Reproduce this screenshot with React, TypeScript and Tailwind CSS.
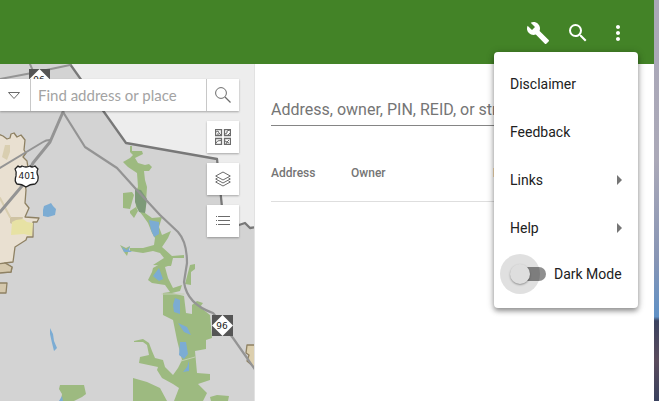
import type { ReactNode } from "react";
import { MdArrowRight, MdBuild, MdMoreVert, MdSearch } from "react-icons/md";

function CountyMap() {
  return (
    <svg className="h-full w-full [grid-area:1/1]" role="img" aria-label="County map">
      <g transform="translate(0 -64)" strokeLinejoin="round" strokeLinecap="round">
        <path d="M70 64 126 143 217 159 222 207 230 222 239 225 245 223 250 228 256 227V64Z" fill="#ededed" />

        {/* municipal limits */}
        <g stroke="#8e8163" strokeWidth="1.3" fill="#e9e0d1">
          <path d="M-2 134 3 136 7 139 10 138 11 134 14 133 17 137 21 135 25 140 24 150 26 153 23 157 27 161 29 175 25 184 26 190 25 203 29 208 25 217 39 218 37 222 33 222 33 237 27 237 26 240 15 247 13 262 5 263 12 267 11 272-2 273Z" />
          <path d="M-2 264 5 263 12 267 11 272-2 273ZM-2 283 7 283 6 293-2 293Z" fill="#d5c8ac" />
          <path d="M256 345 247 345 246 353 249 355 247 361 256 369Z" fill="#dccfae" />
        </g>
        <path d="M5 145 10 145 10 152 7 160 2 157Z" fill="#d9ceb0" />
        <path d="M10 217 23 217 22 221 14 225 10 223Z" fill="#cfc3a3" />
        <path d="M0 198 10 217" stroke="#d9ceb0" strokeWidth="2" />
        <path d="M12 222 16 220 23 219 27 222 33 223 32 236 24 234 11 235Z" fill="#e7e2a4" />

        {/* parks and game lands */}
        <g fill="#9dba80">
          <path d="M130 146 132 146 132 151 142 151 143 154 135 158 138 163 145 165 149 164 152 167 149 171 144 171 145 180 147 187 146 202 145 213 152 218 162 217 159 227 162 235 171 231 168 238 162 247 172 256 184 255 184 258 173 258 171 266 153 265 164 258 160 253 153 251 143 253 130 251 130 248 143 248 154 245 155 238 152 233 148 223 143 216 136 207 135 193 138 187 137 173 128 167 123 162 130 158 133 155 130 152Z" />
          <path d="M123 193 132 192 134 195 130 209 123 208ZM130 211 136 207 138 211 134 218 130 213Z" />
          <path d="M148 280 152 272 153 268 160 264 166 262 172 259 171 265 165 267 168 278 173 288 182 285 180 291 172 293 184 296 186 313 192 314 192 305 197 301 203 303 200 307 210 315 212 338 206 340 206 349 195 351 197 373 210 374 210 380 198 384 207 393 203 401 174 401 179 388 173 384 162 378 157 370 158 367 139 363 140 357 149 355 147 345 143 342 134 342 134 341 143 339 149 343 152 351 155 358 163 360 165 367 173 375 178 368 182 360 177 340 173 320 163 315 163 293 170 292 165 285 152 283Z" />
          <path d="M190 265 195 264 195 269 191 272 191 285 185 284Z" />
          <path d="M133 378 147 382 160 388 167 401 133 401ZM60 385 84 385 86 394 82 397 74 401 61 401 62 394 59 389ZM210 397 217 395 229 396 228 401 211 401Z" />
          <path d="M120 245 126 248 130 246 127 256 124 252Z" />
        </g>
        <path d="M135 189 141 190 147 199 145 213 139 212 135 202Z" fill="#7d9a78" />
        <path d="M162 294 184 294M181 361 195 357" stroke="#c4cfb4" />

        {/* lakes and ponds */}
        <g fill="#7cacd3">
          <path d="M43 210 44 206 49 204 51 203 53 206 56 209 55 215 48 217 43 216ZM50 328 53 334 54 341 57 348 54 351 52 343 50 334Z" />
          <path d="M149 220 159 222 159 234 154 237 151 230ZM122 247 127 250 130 246 129 250 132 252 124 252ZM153 276 159 268 163 279 159 281 154 277Z" />
          <path d="M175 298 180 300 180 314 174 312 173 305ZM178 323 187 327 191 335 184 332ZM180 342 186 342 188 354 184 359 179 355ZM189 361 189 371 183 372 187 367ZM62 396 63 401H59Z" />
        </g>

        {/* county line */}
        <path d="M70 64 126 143 217 159 222 207 230 222 239 225 245 223 250 228 256 227" fill="none" stroke="#787878" strokeWidth="2.3" />

        {/* highways */}
        <g fill="none" stroke="#949494">
          <path d="M0 79 32 73 70 65M30 64 33 71M50 140Q46 140 43 142L0 168" strokeWidth="2" />
          <path d="M63 112 50 142 33 163 22 186 0 212" strokeWidth="3" />
          <path d="M63 112 85 147 117 168 135 188 160 215 178 232Q187 242 187 263L184 282Q187 304 213 313L233 338 247 358 256 371" strokeWidth="2.2" />
        </g>

        <g fontFamily='"DejaVu Sans", sans-serif' textAnchor="middle" fill="#222">
          <path d="M29 69H50V90H29Z" fill="#555" />
          <path d="M39.500 69 50 79.500 39.500 90 29 79.500Z" fill="#fff" />
          <text x="39" y="83" fontSize="9">96</text>
          <path d="M212 315H233V336H212Z" fill="#555" />
          <path d="M222.500 315 233 325.500 222.500 336 212 325.500Z" fill="#fff" />
          <text x="222" y="329" fontSize="9">96</text>
          <path d="M18 166Q20 168 22 166 26 168 30 166 32 168 35 166L38 169Q36 172 38 176 39 181 35 184 30 184 26 187 22 184 17 184 14 181 16 176 17 172 15 169Z" fill="#fff" stroke="#222" strokeWidth="1.300" />
          <text x="27" y="179" fontSize="9">401</text>
        </g>
      </g>
    </svg>
  );
}

const line = { fill: "none", stroke: "#6b6b6b", strokeWidth: 1 } as const;

function ToolButton({ label, children }: { label: string; children: ReactNode }) {
  return (
    <button aria-label={label} className="flex size-8 items-center justify-center bg-white shadow-[0_1px_2px_rgba(0,0,0,0.3)]">
      {children}
    </button>
  );
}

function MapPane() {
  return (
    <section className="grid w-[39%] shrink-0 grid-cols-1 overflow-hidden border-r border-[#e2e2e2] bg-[#d3d3d3]">
      <CountyMap />
      <div className="z-10 flex flex-col items-end gap-[10px] pt-[15px] pr-[15px] [grid-area:1/1]">
        <form className="flex h-8 w-full bg-white shadow-[0_1px_2px_rgba(0,0,0,0.3)]">
          <button type="button" aria-label="Search sources" className="flex w-[31px] items-center justify-center border-r border-[#c8c8c8] pr-[2px]">
            <svg width="14" height="14" viewBox="0 0 14 14" {...line}>
              <path d="M1.500 4.500H12.500L7 10.500Z" />
            </svg>
          </button>
          <input
            aria-label="Find address or place"
            placeholder="Find address or place"
            className="min-w-0 flex-1 px-[7px] font-[Lato,sans-serif] text-[15px] outline-none placeholder:text-[#a3a3a3]"
          />
          <button type="button" aria-label="Search map" className="flex w-[33px] items-center justify-center border-l border-[#c8c8c8]">
            <svg width="16" height="16" viewBox="0 0 16 16" {...line}>
              <circle cx="6" cy="6" r="5.400" />
              <path d="M10 10 15.500 15.500" strokeWidth="1.300" />
            </svg>
          </button>
        </form>
        <ToolButton label="Basemaps">
          <svg width="16" height="16" viewBox="0 0 16 16" {...line}>
            <path d="M.5.500h6v6h-6ZM9.500.500h6v6h-6ZM.5 9.500h6v6h-6ZM9.500 9.500h6v6h-6Z" strokeWidth="1.300" />
            <path d="M1 3 3 2 4 4 6 6M2 5 4 5M10 5 12 4 12 2 15 1M13 6 15 4M1 14Q2 11 6 11.500M10 12 12 13 14 11M11 15 12 13 14 14" />
          </svg>
        </ToolButton>
        <ToolButton label="Layers">
          <svg width="16" height="16" viewBox="0 0 16 16" {...line}>
            <path d="M8 1 15.300 5 8 9 .7 5ZM2.500 7 .7 8 8 12 15.300 8 13.500 7M2.500 10 .7 11 8 15 15.300 11 13.500 10" />
          </svg>
        </ToolButton>
        <ToolButton label="Legend">
          <svg width="16" height="16" viewBox="0 0 16 16" {...line}>
            <path d="M3 3.500H15M3 7.500H15M3 11.500H15M1 3.500H2M1 7.500H2M1 11.500H2" />
          </svg>
        </ToolButton>
      </div>
    </section>
  );
}

function ResultsPane() {
  return (
    <section className="min-w-0 flex-1 overflow-hidden bg-white px-4 pt-[30px]">
      <input
        aria-label="Search property"
        placeholder="Address, owner, PIN, REID, or street"
        className="block h-8 w-full border-b border-[#858585] text-base outline-none placeholder:text-[#757575]"
      />
      <table className="mt-[19px] w-full table-fixed text-left text-xs text-[#757575]">
        <thead>
          <tr className="h-14 border-b border-[#dedede]">
            <th className="w-20 font-medium">Address</th>
            <th className="w-[142px] font-medium">Owner</th>
            <th className="font-medium">PIN</th>
          </tr>
        </thead>
      </table>
    </section>
  );
}

function MenuItem({ label, submenu = false }: { label: string; submenu?: boolean }) {
  return (
    <button role="menuitem" className="flex h-12 w-full items-center justify-between pl-4 text-left">
      {label}
      {submenu && <MdArrowRight className="mr-[7px] size-6 text-[#757575]" />}
    </button>
  );
}

function OverflowMenu() {
  return (
    <div
      role="menu"
      className="absolute top-[52px] right-4 z-20 w-36 rounded bg-white pt-2 pb-3 text-sm text-[#212121] shadow-[0_3px_5px_rgba(0,0,0,0.35),0_1px_8px_rgba(0,0,0,0.2)]"
    >
      <MenuItem label="Disclaimer" />
      <MenuItem label="Feedback" />
      <MenuItem label="Links" submenu />
      <MenuItem label="Help" submenu />
      <label className="flex h-11 items-center pl-[6px]">
        <span className="grid h-10 w-[46px] items-center">
          <span className="ml-4 h-[14px] w-[30px] rounded-full bg-[#8f8f8f] [grid-area:1/1]" />
          <span className="z-10 flex size-10 items-center justify-center rounded-full bg-black/12 [grid-area:1/1]">
            <input
              type="checkbox"
              role="switch"
              className="size-5 appearance-none rounded-full bg-[#dedede] shadow-[0_1px_2px_rgba(0,0,0,0.35)]"
            />
          </span>
        </span>
        <span className="ml-2 whitespace-nowrap">Dark Mode</span>
      </label>
    </div>
  );
}

function HeaderButton({ label, children }: { label: string; children: ReactNode }) {
  return (
    <button aria-label={label} className="flex size-10 items-center justify-center text-2xl">
      {children}
    </button>
  );
}

export default function App() {
  return (
    <div className="flex min-h-screen bg-[linear-gradient(#aaa8b8_0,#aba9b8_40%,#8795b5_65%,#5f91c6_79%,#3c4360_80%,#5b4c5d_90%,#39415e)] pr-[5px] font-[Roboto,sans-serif]">
      <div className="relative flex min-w-0 flex-1 flex-col bg-white">
        <header className="flex h-16 items-center justify-end bg-[#438327] pt-[2px] pr-4 text-white">
          <HeaderButton label="Tools"><MdBuild /></HeaderButton>
          <HeaderButton label="Search"><MdSearch /></HeaderButton>
          <HeaderButton label="More options"><MdMoreVert /></HeaderButton>
        </header>
        <main className="flex flex-1">
          <MapPane />
          <ResultsPane />
        </main>
        <OverflowMenu />
      </div>
    </div>
  );
}
